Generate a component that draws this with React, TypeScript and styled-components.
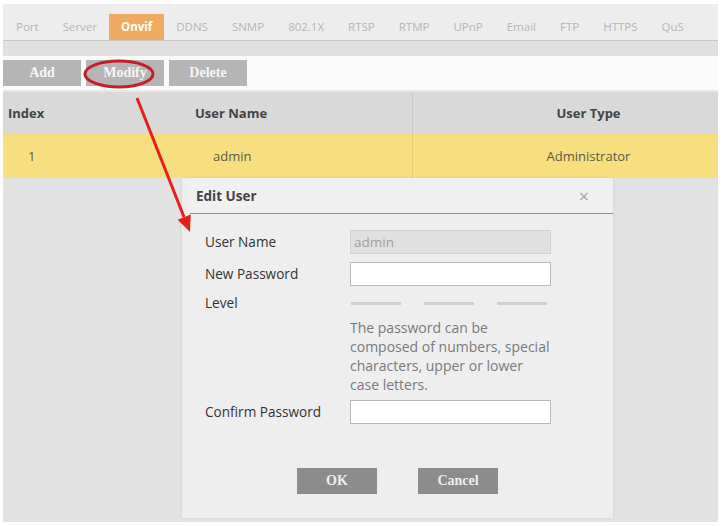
import React from 'react'
import styled, { createGlobalStyle } from 'styled-components'

const GlobalStyle = createGlobalStyle`
  html, body {
    margin: 0;
    padding: 0;
    background: #ffffff;
  }
  * {
    box-sizing: border-box;
  }
`

const Page = styled.div`
  position: relative;
  width: 723px;
  height: 526px;
  padding: 4px 5px 4px 3px;
  background: #ffffff;
  font-family: 'Open Sans', 'Liberation Sans', sans-serif;
`
const Frame = styled.div`
  display: flex;
  flex-direction: column;
  height: 100%;
  background: #e2e2e2;
`
const TabBar = styled.div`
  display: flex;
  align-items: flex-end;
  height: 37px;
  padding-left: 1px;
  background: #ededed;
  border-bottom: 1px solid #c6c6c6;
`
const Tab = styled.div<{ $active?: boolean }>`
  height: 26px;
  line-height: 26px;
  padding: 0 12px;
  font-size: 11.5px;
  font-weight: ${({ $active }) => ($active ? 700 : 400)};
  color: ${({ $active }) => ($active ? '#ffffff' : '#b6b6b6')};
  background: ${({ $active }) => ($active ? '#f1aa62' : 'transparent')};
`
const Band = styled.div`
  height: 15px;
  background: #e0e0e0;
`
const Toolbar = styled.div`
  display: flex;
  align-items: center;
  gap: 5px;
  height: 34px;
  background: #fafafa;
`
const ToolButton = styled.div`
  width: 78px;
  height: 26px;
  line-height: 26px;
  text-align: center;
  background: #b5b5b5;
  color: #f6f6f6;
  font-family: 'Liberation Serif', serif;
  font-size: 14px;
  font-weight: 700;
`
const Spacer = styled.div`
  height: 2px;
  background: #e6e6e6;
`
const TableRow = styled.div<{ $head?: boolean }>`
  display: grid;
  grid-template-columns: 180px 229px 1fr;
  height: ${({ $head }) => ($head ? '42px' : '44px')};
  background: ${({ $head }) => ($head ? '#d9d9d9' : '#f7df7f')};
  color: ${({ $head }) => ($head ? '#444444' : '#5a5a4a')};
  font-size: 13px;
  font-weight: ${({ $head }) => ($head ? 700 : 400)};
`
const Cell = styled.div<{ $pad: number; $center?: boolean; $divider?: boolean }>`
  display: flex;
  align-items: center;
  justify-content: ${({ $center }) => ($center ? 'center' : 'flex-start')};
  padding-left: ${({ $pad }) => $pad}px;
  border-left: ${({ $divider }) => ($divider ? '1px solid rgba(0,0,0,0.08)' : 'none')};
`
const Dialog = styled.div`
  position: absolute;
  left: 182px;
  top: 178px;
  width: 431px;
  height: 340px;
  display: flex;
  flex-direction: column;
  background: #eeeeee;
  box-shadow: 0 0 3px rgba(0, 0, 0, 0.08);
`
const DialogHeader = styled.div`
  display: flex;
  align-items: center;
  justify-content: space-between;
  height: 36px;
  margin-left: 8px;
  padding: 0 24px 0 6px;
  border-bottom: 1px solid #909090;
  background: #f0f0f0;
  font-size: 13.5px;
  font-weight: 700;
  color: #444444;
`
const Close = styled.span`
  font-size: 18px;
  font-weight: 400;
  color: #a6a6a6;
`
const DialogBody = styled.div`
  display: flex;
  flex-direction: column;
  padding: 16px 0 0 23px;
`
const FormRow = styled.div<{ $mt: number }>`
  display: grid;
  grid-template-columns: 145px 201px;
  align-items: center;
  margin-top: ${({ $mt }) => $mt}px;
`
const Label = styled.div`
  font-size: 13.6px;
  line-height: 18px;
  color: #333333;
`
const Field = styled.div<{ $disabled?: boolean }>`
  height: 24px;
  padding-left: 3px;
  line-height: 22px;
  border: 1px solid ${({ $disabled }) => ($disabled ? '#d2d2d2' : '#b8b8b8')};
  background: ${({ $disabled }) => ($disabled ? '#e0e0e0' : '#ffffff')};
  color: #a0a0a0;
  font-size: 13.5px;
`
const Meter = styled.div`
  display: flex;
  gap: 23px;
  padding-left: 1px;
`
const MeterBar = styled.div`
  width: 50px;
  height: 3px;
  background: #cfcfcf;
`
const Hint = styled.div`
  margin-top: 6px;
  margin-left: 145px;
  font-size: 14px;
  line-height: 19px;
  color: #7a7a7a;
`
const Actions = styled.div`
  display: flex;
  justify-content: center;
  gap: 41px;
  margin-top: 44px;
  padding-right: 23px;
`
const DialogButton = styled.div`
  width: 80px;
  height: 26px;
  line-height: 26px;
  text-align: center;
  background: #8c8c8c;
  color: #eeeeee;
  font-family: 'Liberation Serif', serif;
  font-size: 14px;
  font-weight: 700;
`
const Annotation = styled.svg`
  position: absolute;
  left: 0;
  top: 0;
  pointer-events: none;
`

const tabs = ['Port', 'Server', 'Onvif', 'DDNS', 'SNMP', '802.1X', 'RTSP', 'RTMP', 'UPnP', 'Email', 'FTP', 'HTTPS', 'QuS']

const App = () => {
  return (
    <Page>
      <GlobalStyle />
      <Frame>
        <TabBar>
          {tabs.map((t) => (
            <Tab key={t} $active={t === 'Onvif'}>
              {t}
            </Tab>
          ))}
        </TabBar>
        <Band />
        <Toolbar>
          <ToolButton>Add</ToolButton>
          <ToolButton>Modify</ToolButton>
          <ToolButton>Delete</ToolButton>
        </Toolbar>
        <Spacer />
        <TableRow $head>
          <Cell $pad={5}>Index</Cell>
          <Cell $pad={12}>User Name</Cell>
          <Cell $pad={46} $center $divider>
            User Type
          </Cell>
        </TableRow>
        <TableRow>
          <Cell $pad={25}>1</Cell>
          <Cell $pad={30}>admin</Cell>
          <Cell $pad={46} $center $divider>
            Administrator
          </Cell>
        </TableRow>
      </Frame>

      <Dialog>
        <DialogHeader>
          Edit User
          <Close>×</Close>
        </DialogHeader>
        <DialogBody>
          <FormRow $mt={0}>
            <Label>User Name</Label>
            <Field $disabled>admin</Field>
          </FormRow>
          <FormRow $mt={8}>
            <Label>New Password</Label>
            <Field />
          </FormRow>
          <FormRow $mt={8}>
            <Label>Level</Label>
            <Meter>
              <MeterBar />
              <MeterBar />
              <MeterBar />
            </Meter>
          </FormRow>
          <Hint>
            The password can be
            <br />
            composed of numbers, special
            <br />
            characters, upper or lower
            <br />
            case letters.
          </Hint>
          <FormRow $mt={6}>
            <Label>Confirm Password</Label>
            <Field />
          </FormRow>
          <Actions>
            <DialogButton>OK</DialogButton>
            <DialogButton>Cancel</DialogButton>
          </Actions>
        </DialogBody>
      </Dialog>

      <Annotation width="723" height="526" viewBox="0 0 723 526">
        <ellipse cx="119" cy="74" rx="34" ry="13" fill="none" stroke="#c41e2a" strokeWidth="3" />
        <line x1="137" y1="98" x2="184" y2="217" stroke="#e3201c" strokeWidth="3" />
        <polygon points="190,232 190.7,214.5 177.7,219.7" fill="#e3201c" />
      </Annotation>
    </Page>
  )
}

export default App
